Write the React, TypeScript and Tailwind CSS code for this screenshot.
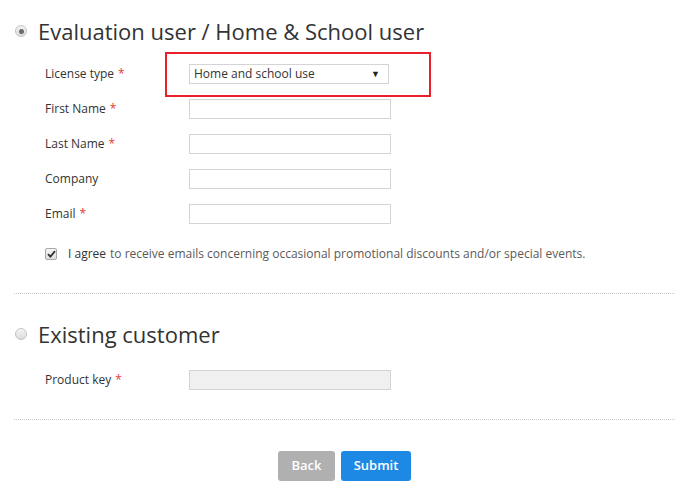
import React from "react";

const FONT = { fontFamily: '"Open Sans", "Noto Sans", Arial, sans-serif' };

function Radio({ checked }: { checked?: boolean }) {
  return (
    <span className="flex h-[12px] w-[12px] shrink-0 items-center justify-center rounded-full border border-[#c4c4c4] bg-gradient-to-b from-[#f4f4f4] to-[#dcdcdc]">
      {checked && <span className="h-[5px] w-[5px] rounded-full bg-[#6b6b6b]" />}
    </span>
  );
}

function Req() {
  return <span className="ml-1 text-[#e53935]">*</span>;
}

function Row({
  label,
  required,
  children,
}: {
  label: string;
  required?: boolean;
  children: React.ReactNode;
}) {
  return (
    <div className="flex h-[20px] items-center">
      <div className="w-[175px] pl-[31px] text-[12px] text-[#333]">
        {label}
        {required && <Req />}
      </div>
      {children}
    </div>
  );
}

function TextInput({ disabled }: { disabled?: boolean }) {
  return (
    <input
      disabled={disabled}
      className={`h-[20px] w-[202px] border border-[#d4d4d4] outline-none ${
        disabled ? "bg-[#f0f0f0]" : "bg-white"
      }`}
    />
  );
}

export default function App() {
  return (
    <div className="min-h-[488px] bg-white pl-[14px] pr-[16px] pt-[14px]" style={FONT}>
      <div className="relative">
        <div className="flex h-[34px] items-center gap-[11px] pl-[1px]">
          <Radio checked />
          <h1 className="text-[22px] leading-none text-[#333]">Evaluation user / Home &amp; School user</h1>
        </div>

        <div className="mt-[16px] flex flex-col gap-[15px]">
          <Row label="License type" required>
            <div className="flex h-[20px] w-[200px] items-center justify-between border border-[#d4d4d4] bg-white pl-[4px] pr-[8px] text-[12px] text-[#333]">
              <span>Home and school use</span>
              <span className="text-[9px] text-[#222]">▼</span>
            </div>
          </Row>
          <Row label="First Name" required>
            <TextInput />
          </Row>
          <Row label="Last Name" required>
            <TextInput />
          </Row>
          <Row label="Company">
            <TextInput />
          </Row>
          <Row label="Email" required>
            <TextInput />
          </Row>
        </div>

        <div className="mt-[20px] flex h-[20px] items-center pl-[31px] text-[12px]">
          <span className="flex h-[12px] w-[12px] items-center justify-center rounded-[2px] border border-[#a8a8a8] bg-gradient-to-b from-[#f6f6f6] to-[#dedede]">
            <svg width="9" height="8" viewBox="0 0 9 8">
              <path d="M1 4.2 L3.4 6.6 L8 1.2" fill="none" stroke="#333" strokeWidth="1.8" />
            </svg>
          </span>
          <span className="ml-[11px] text-[#333]">I agree</span>
          <span className="ml-[4px] text-[#5a5a5a]">
            to receive emails concerning occasional promotional discounts and/or special events.
          </span>
        </div>

        {/* annotation around the license type select */}
        <div className="absolute left-[151px] top-[38px] h-[45px] w-[266px] border-2 border-[#e8202a]" />
      </div>

      <div className="mt-[29px] border-t border-dotted border-[#c8c8c8]" />

      <div className="mt-[23px] flex h-[34px] items-center gap-[11px] pl-[1px]">
        <Radio />
        <h2 className="text-[22px] leading-none text-[#333]">Existing customer</h2>
      </div>
      <div className="mt-[19px]">
        <Row label="Product key" required>
          <TextInput disabled />
        </Row>
      </div>

      <div className="mt-[29px] border-t border-dotted border-[#c8c8c8]" />

      <div className="mt-[31px] flex justify-center gap-[6px]">
        <button className="h-[30px] w-[57px] rounded-[3px] bg-[#b0b0b0] text-[13px] font-semibold text-white">
          Back
        </button>
        <button className="h-[30px] w-[70px] rounded-[3px] bg-[#1e88e5] text-[13px] font-semibold text-white">
          Submit
        </button>
      </div>
    </div>
  );
}
